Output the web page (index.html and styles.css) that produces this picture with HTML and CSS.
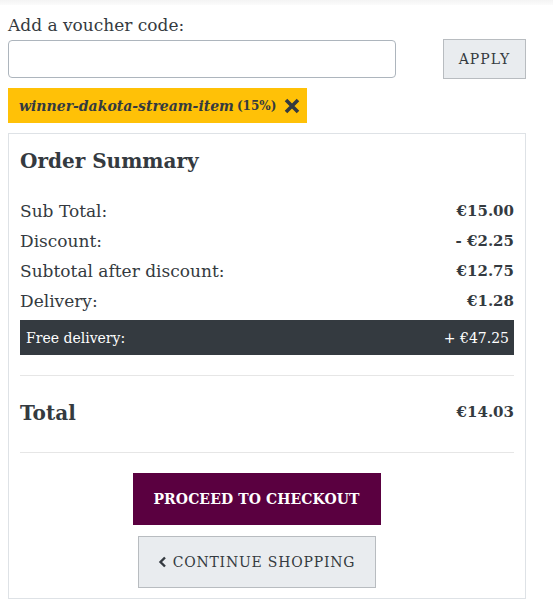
FILE: index.html
```html
<!DOCTYPE html>
<html>
<head>
<meta charset="utf-8">
<link rel="stylesheet" href="styles.css">
</head>
<body>
<div class="topband"></div>
<div class="page">
  <label class="voucher-label" for="voucher">Add a voucher code:</label>
  <div class="voucher-row">
    <input id="voucher" class="voucher-input" type="text">
    <button class="btn-apply">APPLY</button>
  </div>
  <div class="tag">
    <span class="tag-code">winner-dakota-stream-item</span>
    <span class="tag-pct">(15%)</span>
    <svg class="tag-x" width="18" height="18" viewBox="0 0 18 18"><path d="M3 3 L15 15 M15 3 L3 15" stroke="#343a40" stroke-width="3.6" stroke-linecap="butt" fill="none"/></svg>
  </div>
  <div class="card">
    <h2 class="card-title">Order Summary</h2>
    <div class="rows">
      <div class="row"><span>Sub Total:</span><b>€15.00</b></div>
      <div class="row"><span>Discount:</span><b>- €2.25</b></div>
      <div class="row"><span>Subtotal after discount:</span><b>€12.75</b></div>
      <div class="row"><span>Delivery:</span><b>€1.28</b></div>
    </div>
    <div class="free-bar"><span>Free delivery:</span><span>+ €47.25</span></div>
    <hr class="sep">
    <div class="total-row"><span class="total-label">Total</span><b class="total-val">€14.03</b></div>
    <hr class="sep sep2">
    <div class="actions">
      <button class="btn-checkout">PROCEED TO CHECKOUT</button>
      <button class="btn-continue"><svg class="chev" width="10" height="12" viewBox="0 0 10 12"><path d="M7 1.5 L2.5 6 L7 10.5" stroke="#343a40" stroke-width="2.4" fill="none"/></svg>CONTINUE SHOPPING</button>
    </div>
  </div>
</div>
</body>
</html>
```
FILE: styles.css
```css
* { box-sizing: border-box; }
body {
  margin: 0;
  font-family: "DejaVu Serif", "Liberation Serif", serif;
  color: #343a40;
  background: #fff;
}
.topband {
  height: 5px;
  background: linear-gradient(#f4f4f4, #fbfbfb);
}
.page {
  width: 526px;
  padding: 0 0 0 8px;
}
.voucher-label {
  display: block;
  font-size: 17px;
  line-height: 22px;
  margin-top: 9px;
}
.voucher-row {
  display: flex;
  align-items: flex-end;
  justify-content: space-between;
  margin-top: 3px;
}
.voucher-input {
  width: 388px;
  height: 38px;
  border: 1px solid #adb5bd;
  border-radius: 4px;
  margin: 0;
}
.btn-apply {
  width: 83px;
  height: 40px;
  background: #e9ecef;
  border: 1px solid #b8bcc0;
  font-family: inherit;
  font-size: 14px;
  letter-spacing: 1px;
  color: #343a40;
  margin-bottom: -1px;
}
.tag {
  display: inline-flex;
  align-items: center;
  background: #ffc107;
  height: 35px;
  margin-top: 10px;
  padding: 0 6px 0 11px;
}
.tag-code {
  font-style: italic;
  font-weight: bold;
  font-size: 14px;
}
.tag-pct {
  font-size: 12px;
  font-weight: bold;
  margin-left: 3px;
}
.tag-x { margin-left: 7px; }
.card {
  border: 1px solid #dee2e6;
  margin-top: 10px;
  padding: 11px 11px 10px;
}
.card-title {
  margin: 0;
  font-size: 20px;
  line-height: 32px;
  font-weight: bold;
}
.rows { margin-top: 19px; }
.row {
  display: flex;
  justify-content: space-between;
  align-items: center;
  height: 30px;
  font-size: 17px;
}
.row b { font-size: 15px; }
.free-bar {
  display: flex;
  justify-content: space-between;
  align-items: center;
  background: #343a40;
  color: #fff;
  height: 35px;
  padding: 0 5px 0 6px;
  font-size: 14px;
  margin-top: 4px;
}
.sep {
  border: 0;
  border-top: 1px solid #e6e6e6;
  margin: 20px 0 0;
}
.total-row {
  display: flex;
  justify-content: space-between;
  align-items: flex-start;
  height: 76px;
  padding-top: 24px;
}
.total-label { font-size: 20px; font-weight: bold; line-height: 26px; }
.total-val { font-size: 15px; line-height: 24px; }
.sep2 { margin-top: 0; }
.actions {
  display: flex;
  flex-direction: column;
  align-items: center;
  gap: 11px;
  margin-top: 20px;
  padding-right: 21px;
}
.btn-checkout {
  width: 248px;
  height: 52px;
  background: #5a0040;
  color: #fff;
  border: 0;
  font-family: inherit;
  font-weight: bold;
  font-size: 14px;
  letter-spacing: 0.1px;
}
.btn-continue {
  width: 238px;
  height: 52px;
  background: #e9ecef;
  border: 1px solid #b8bcc0;
  color: #343a40;
  font-family: inherit;
  font-size: 14px;
  letter-spacing: 0.8px;
  display: flex;
  align-items: center;
  justify-content: center;
}
.chev { margin-right: 5px; }
```
